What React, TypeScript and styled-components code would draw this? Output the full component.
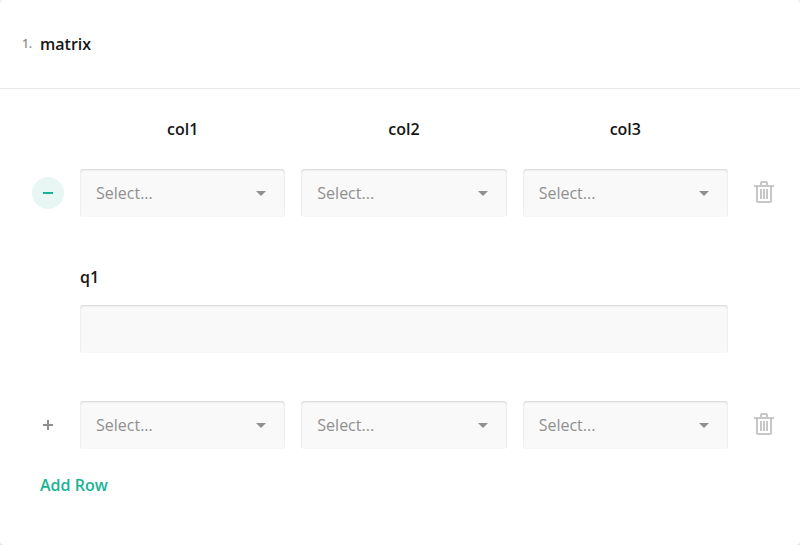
import React from "react";
import styled, { createGlobalStyle } from "styled-components";

const GlobalStyle = createGlobalStyle`
  * { box-sizing: border-box; }
  body {
    margin: 0;
    background: #f3f3f3;
    font-family: "Open Sans", sans-serif;
    font-size: 16px;
    line-height: 24px;
    color: #161616;
  }
`;

const Card = styled.section`
  height: 545px;
  background: #fff;
  border-radius: 4px;
  box-shadow: 0 1px 2px rgba(0, 0, 0, 0.15);
`;

const Header = styled.header`
  display: flex;
  align-items: center;
  height: 89px;
  padding-left: 22px;
  border-bottom: 1px solid #eaeaea;
`;

const QuestionNumber = styled.span`
  width: 18px;
  font-size: 12px;
  line-height: 16px;
  font-weight: 600;
  color: #909090;
`;

const Title = styled.h5`
  margin: 0;
  font-size: 16px;
  font-weight: 600;
`;

const Grid = styled.div`
  display: grid;
  grid-template-columns: 32px repeat(3, 1fr) 32px;
  column-gap: 16px;
  padding: 28px 24px 0 32px;
`;

const Row = styled(Grid)<{ $top: number }>`
  align-items: center;
  padding-top: ${(p) => p.$top}px;
`;

const ColumnTitle = styled.div`
  font-weight: 600;
  text-align: center;
`;

const Field = styled.div`
  display: flex;
  align-items: center;
  justify-content: space-between;
  height: 48px;
  padding: 0 19px 0 16px;
  border-radius: 4px;
  background: #f9f9f9;
  box-shadow: inset 0 1px 2px rgba(0, 0, 0, 0.15);
  color: #909090;
`;

const TextInput = styled.input`
  display: block;
  width: 100%;
  height: 48px;
  margin-top: 16px;
  padding: 0 16px;
  border: 0;
  border-radius: 4px;
  background: #f9f9f9;
  box-shadow: inset 0 1px 2px rgba(0, 0, 0, 0.15);
  font: inherit;
`;

const IconButton = styled.button<{ $active?: boolean }>`
  display: flex;
  align-items: center;
  justify-content: center;
  width: 32px;
  height: 32px;
  padding: 0;
  border: 0;
  border-radius: 50%;
  background: ${(p) => (p.$active ? "#e8f7f4" : "transparent")};
  color: ${(p) => (p.$active ? "#19b394" : "#909090")};
`;

const DeleteButton = styled.button`
  display: block;
  justify-self: end;
  width: 24px;
  height: 24px;
  padding: 0;
  border: 0;
  background: none;
  color: #c7c7c7;
  svg { display: block; }
`;

const Detail = styled.div`
  padding: 48px 72px 0 80px;
`;

const DetailTitle = styled.label`
  display: block;
  font-weight: 600;
`;

const AddRow = styled.button`
  display: block;
  margin: 24px 0 0 40px;
  padding: 0;
  border: 0;
  background: none;
  font: inherit;
  font-weight: 600;
  color: #19b394;
`;

const Select = () => (
  <Field role="combobox">
    Select...
    <svg width="10" height="5" viewBox="0 0 10 5" fill="#909090">
      <path d="M0 0H10L5 5Z" />
    </svg>
  </Field>
);

const MatrixRow = ({ top, expanded }: { top: number; expanded?: boolean }) => (
  <Row $top={top}>
    <IconButton $active={expanded}>
      <svg width="10" height="10" viewBox="0 0 10 10" fill="currentColor">
        <path d={expanded ? "M0 4H10V6H0Z" : "M4 0H6V4H10V6H6V10H4V6H0V4H4Z"} />
      </svg>
    </IconButton>
    <Select />
    <Select />
    <Select />
    <DeleteButton>
      <svg width="24" height="24" viewBox="0 0 24 24" fill="currentColor">
        <path d="M22 4H16V2C16 .9 15.1 0 14 0H10C8.9 0 8 .9 8 2V4H2V6H4V20C4 21.1 4.9 22 6 22H18C19.1 22 20 21.1 20 20V6H22V4ZM10 2H14V4H10V2ZM18 20H6V6H18V20ZM14 8H16V18H14V8ZM11 8H13V18H11V8ZM8 8H10V18H8V8Z" />
      </svg>
    </DeleteButton>
  </Row>
);

export default function App() {
  return (
    <>
      <GlobalStyle />
      <Card>
        <Header>
          <QuestionNumber>1.</QuestionNumber>
          <Title>matrix</Title>
        </Header>
        <Grid>
          <span />
          <ColumnTitle>col1</ColumnTitle>
          <ColumnTitle>col2</ColumnTitle>
          <ColumnTitle>col3</ColumnTitle>
          <span />
        </Grid>
        <MatrixRow top={28} expanded />
        <Detail>
          <DetailTitle htmlFor="q1">q1</DetailTitle>
          <TextInput id="q1" />
        </Detail>
        <MatrixRow top={48} />
        <AddRow>Add Row</AddRow>
      </Card>
    </>
  );
}
